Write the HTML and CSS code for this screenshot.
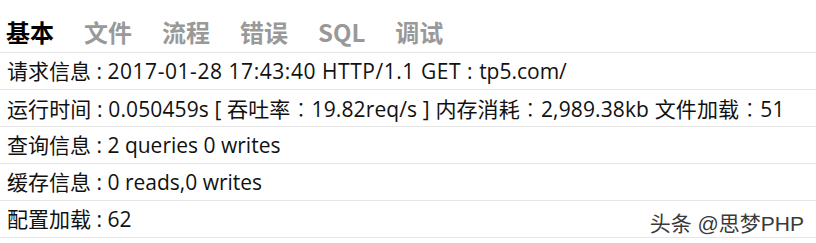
FILE: index.html
```html
<!DOCTYPE html>
<html>
<head>
<meta charset="utf-8">
<link rel="stylesheet" href="styles.css">
</head>
<body>
<div class="page">
  <div class="tabs">
    <span class="tab active">基本</span>
    <span class="tab">文件</span>
    <span class="tab">流程</span>
    <span class="tab">错误</span>
    <span class="tab">SQL</span>
    <span class="tab">调试</span>
  </div>
  <ul class="rows">
    <li class="row">请求信息 : <span class="wide">2017-01-28 17:43:40 HTTP/1.1 GET : </span>tp5.com/</li>
    <li class="row loose">运行时间 : 0.050459s [ 吞吐率<span class="fwc">：</span>19.82req/s ] 内存消耗<span class="fwc">：</span>2,989.38kb 文件加载<span class="fwc">：</span>51</li>
    <li class="row">查询信息 : 2 queries 0 writes</li>
    <li class="row">缓存信息 : 0 reads,0 writes</li>
    <li class="row">配置加载 : 62</li>
  </ul>
  <div class="watermark">头条 @思梦PHP</div>
</div>
</body>
</html>
```
FILE: styles.css
```css
html, body {
  margin: 0;
  padding: 0;
  background: #fff;
}
.page {
  position: relative;
  width: 816px;
  height: 243px;
  overflow: hidden;
  font-family: "Open Sans", "Noto Sans CJK SC", sans-serif;
  color: #111;
}
.tabs {
  display: flex;
  align-items: center;
  gap: 30px;
  height: 52px;
  padding: 0 6px;
  border-bottom: 1px solid #e6e6e6;
  box-sizing: content-box;
}
.tab {
  font-family: "Noto Sans CJK SC", sans-serif;
  font-size: 24px;
  font-weight: 700;
  color: #999;
  padding-top: 12px;
  line-height: 1;
}
.tab.active {
  color: #000;
}
.rows {
  list-style: none;
  margin: 0;
  padding: 0;
}
.row {
  height: 36px;
  line-height: 36px;
  padding: 0 7px;
  font-size: 21px;
  border-bottom: 1px solid #e6e6e6;
  white-space: nowrap;
}
.wide {
  letter-spacing: 0.55px;
}
.loose {
  letter-spacing: 0.12px;
}
.fwc {
  font-family: "Noto Sans CJK TC", "Noto Sans CJK SC", sans-serif;
  font-weight: 300;
}
.watermark {
  position: absolute;
  right: 12px;
  top: 207px;
  font-family: "Liberation Sans", "Noto Sans CJK SC", sans-serif;
  font-size: 21px;
  color: #3a3a3a;
  text-shadow: 0 0 2px #fff, 0 0 2px #fff;
}
```
